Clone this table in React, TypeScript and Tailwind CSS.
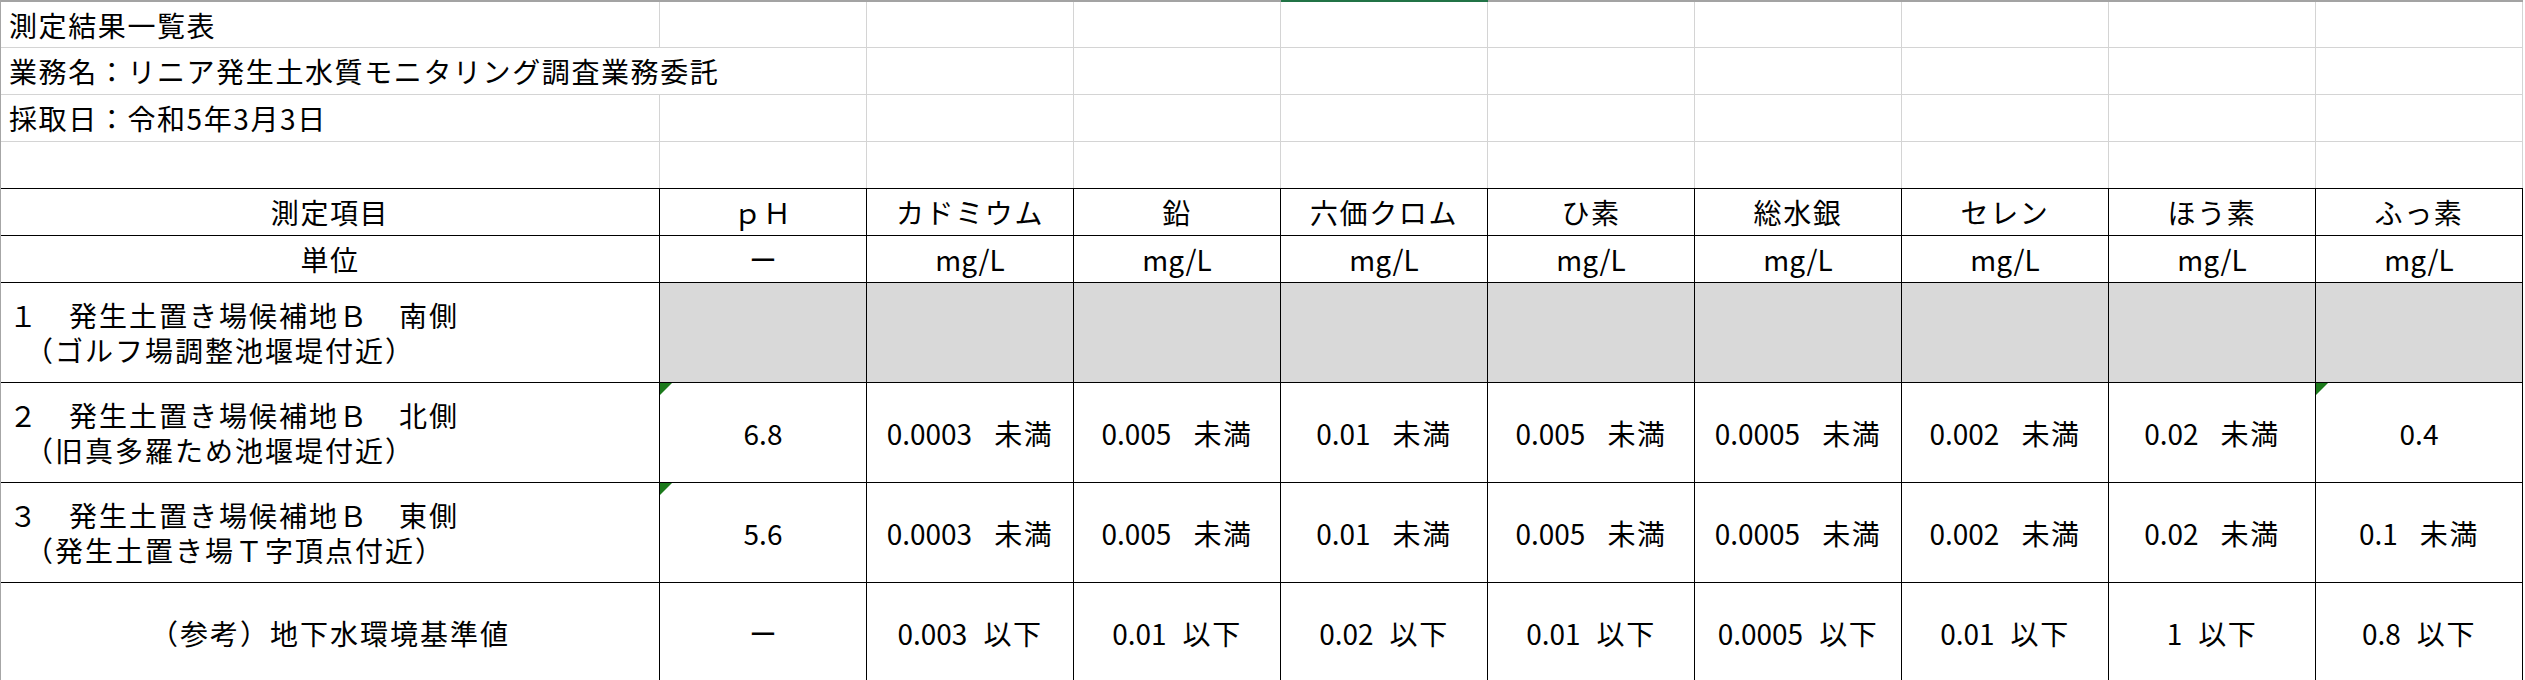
import React from 'react';

type Val = { n: string; s?: '未満' | '以下' };

const ITEMS = ['ｐＨ', 'カドミウム', '鉛', '六価クロム', 'ひ素', '総水銀', 'セレン', 'ほう素', 'ふっ素'];

const lt = (n: string): Val => ({ n, s: '未満' });
const le = (n: string): Val => ({ n, s: '以下' });

const SITES: { l1: string; l2: string; vals: Val[] | null; marks: number[] }[] = [
  { l1: '１　発生土置き場候補地Ｂ　南側', l2: '　（ゴルフ場調整池堰堤付近）', vals: null, marks: [] },
  {
    l1: '２　発生土置き場候補地Ｂ　北側',
    l2: '　（旧真多羅ため池堰堤付近）',
    vals: [{ n: '6.8' }, lt('0.0003'), lt('0.005'), lt('0.01'), lt('0.005'), lt('0.0005'), lt('0.002'), lt('0.02'), { n: '0.4' }],
    marks: [0, 8],
  },
  {
    l1: '３　発生土置き場候補地Ｂ　東側',
    l2: '　（発生土置き場Ｔ字頂点付近）',
    vals: [{ n: '5.6' }, lt('0.0003'), lt('0.005'), lt('0.01'), lt('0.005'), lt('0.0005'), lt('0.002'), lt('0.02'), lt('0.1')],
    marks: [0],
  },
];

const STANDARD: Val[] = [{ n: 'ー' }, le('0.003'), le('0.01'), le('0.02'), le('0.01'), le('0.0005'), le('0.01'), le('1'), le('0.8')];

const SHEET = [
  { text: '測定結果一覧表', h: 'h-[46px]', spill: false, last: false },
  { text: '業務名：リニア発生土水質モニタリング調査業務委託', h: 'h-[47px]', spill: true, last: false },
  { text: '採取日：令和5年3月3日', h: 'h-[47px]', spill: false, last: false },
  { text: '', h: 'h-[46px]', spill: false, last: true },
];

const grid = 'grid grid-cols-[659px_repeat(9,207px)]';

// excel's little green "number stored as text" flag
const Flag = () => (
  <svg className="absolute left-0 top-0" width="12" height="12" viewBox="0 0 12 12">
    <polygon points="0,0 12,0 0,12" fill="#1b7a1b" />
  </svg>
);

const Value = ({ v }: { v: Val }) => {
  if (v.n === 'ー') return <span>ー</span>;
  return (
    <span className="whitespace-nowrap">
      {v.n}
      {v.s === '未満' && <span className="ml-[22px] tracking-[1.6px]">未満</span>}
      {v.s === '以下' && <span className="ml-[16px] tracking-[1.6px]">以下</span>}
    </span>
  );
};

export default function App() {
  return (
    <div className="w-[2525px] h-[680px] overflow-hidden bg-white text-black border-l border-[#a6a6a6] font-['Noto_Sans_CJK_JP',sans-serif] text-[28px] leading-none">
      {/* top edge with selected column marker */}
      <div className={`${grid} h-[2px]`}>
        {Array.from({ length: 10 }).map((_, i) => (
          <div key={i} className={i === 4 ? 'bg-[#217346]' : 'bg-[#a3a3a3]'} />
        ))}
      </div>

      {/* plain sheet rows above the table */}
      {SHEET.map((row, r) => (
        <div key={r} className={`${grid} ${row.h}`}>
          <div
            className={`flex items-center pl-[8px] whitespace-nowrap tracking-[1.6px] border-[#d4d4d4] ${row.spill ? '' : 'border-r'} ${row.last ? '' : 'border-b'}`}
          >
            {row.text}
          </div>
          {ITEMS.map((_, i) => (
            <div key={i} className={`border-[#d4d4d4] border-r ${row.last ? '' : 'border-b'}`} />
          ))}
        </div>
      ))}

      {/* results table */}
      <div className="border-t border-black w-[2522px]">
        <div className={`${grid} h-[47px]`}>
          <div className="flex items-center justify-center border-r border-b border-black tracking-[1.6px]">測定項目</div>
          {ITEMS.map((t) => (
            <div key={t} className="flex items-center justify-center border-r border-b border-black tracking-[1.6px] whitespace-nowrap">
              {t}
            </div>
          ))}
        </div>

        <div className={`${grid} h-[47px]`}>
          <div className="flex items-center justify-center border-r border-b border-black tracking-[1.6px]">単位</div>
          {ITEMS.map((t, i) => (
            <div key={t} className="flex items-center justify-center border-r border-b border-black">
              {i === 0 ? 'ー' : 'mg/L'}
            </div>
          ))}
        </div>

        {SITES.map((s, r) => (
          <div key={r} className={`${grid} h-[100px]`}>
            <div className="flex flex-col justify-center pl-[8px] border-r border-b border-black tracking-[2px] leading-[35px] whitespace-pre">
              <div>{s.l1}</div>
              <div>{s.l2}</div>
            </div>
            {ITEMS.map((t, i) => (
              <div
                key={t}
                className={`relative flex items-center justify-center border-r border-b border-black ${s.vals ? '' : 'bg-[#d9d9d9]'}`}
              >
                {s.marks.includes(i) && <Flag />}
                {s.vals && <Value v={s.vals[i]} />}
              </div>
            ))}
          </div>
        ))}

        <div className={`${grid} h-[100px]`}>
          <div className="flex items-center justify-center border-r border-b border-black tracking-[2px] whitespace-pre">
            （参考）地下水環境基準値
          </div>
          {STANDARD.map((v, i) => (
            <div key={i} className="flex items-center justify-center border-r border-b border-black">
              <Value v={v} />
            </div>
          ))}
        </div>
      </div>
    </div>
  );
}
